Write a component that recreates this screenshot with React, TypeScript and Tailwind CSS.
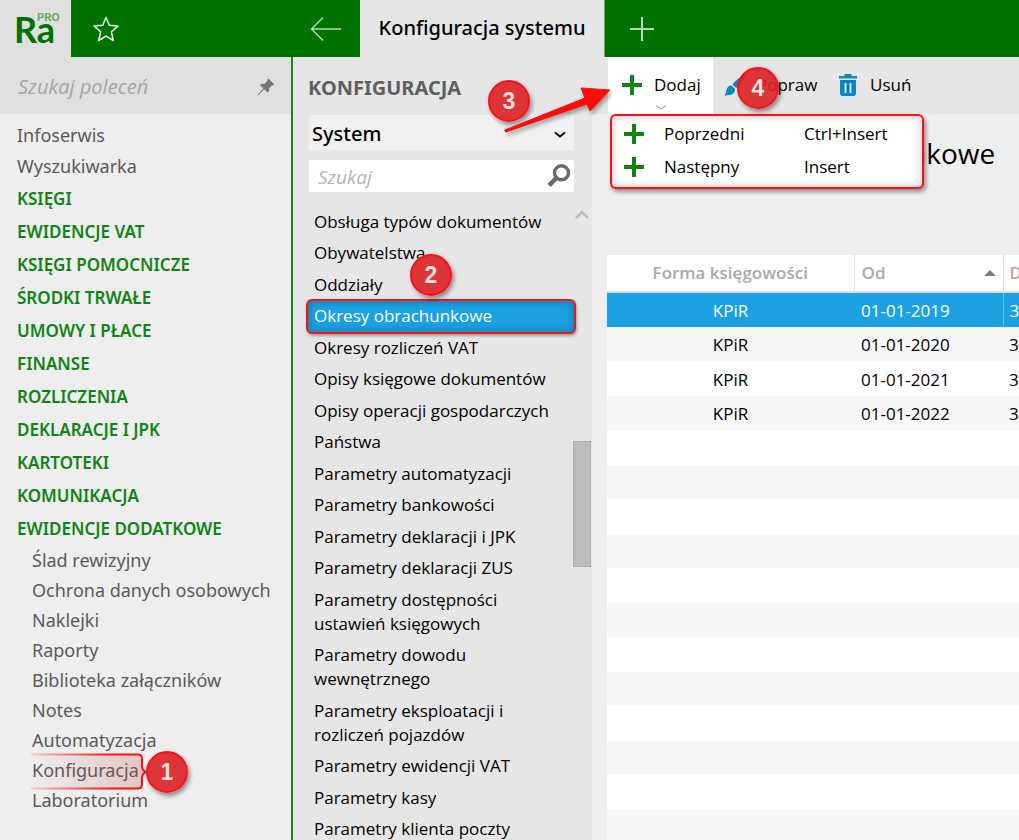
import type { ReactNode } from 'react';

const quickLinks = ['Infoserwis', 'Wyszukiwarka'];

const sections = [
  'KSIĘGI',
  'EWIDENCJE VAT',
  'KSIĘGI POMOCNICZE',
  'ŚRODKI TRWAŁE',
  'UMOWY I PŁACE',
  'FINANSE',
  'ROZLICZENIA',
  'DEKLARACJE I JPK',
  'KARTOTEKI',
  'KOMUNIKACJA',
  'EWIDENCJE DODATKOWE',
];

const extras = [
  'Ślad rewizyjny',
  'Ochrona danych osobowych',
  'Naklejki',
  'Raporty',
  'Biblioteka załączników',
  'Notes',
  'Automatyzacja',
  'Konfiguracja',
  'Laboratorium',
];

const configItems = [
  'Obsługa typów dokumentów',
  'Obywatelstwa',
  'Oddziały',
  'Okresy obrachunkowe',
  'Okresy rozliczeń VAT',
  'Opisy księgowe dokumentów',
  'Opisy operacji gospodarczych',
  'Państwa',
  'Parametry automatyzacji',
  'Parametry bankowości',
  'Parametry deklaracji i JPK',
  'Parametry deklaracji ZUS',
  'Parametry dostępności ustawień księgowych',
  'Parametry dowodu wewnętrznego',
  'Parametry eksploatacji i rozliczeń pojazdów',
  'Parametry ewidencji VAT',
  'Parametry kasy',
  'Parametry klienta poczty',
];

const periods = [
  { form: 'KPiR', from: '01-01-2019', to: '31-12-2019' },
  { form: 'KPiR', from: '01-01-2020', to: '31-12-2020' },
  { form: 'KPiR', from: '01-01-2021', to: '31-12-2021' },
  { form: 'KPiR', from: '01-01-2022', to: '31-12-2022' },
];

const emptyRows = Array.from({ length: 12 }, (_, i) => i);

const menuItems = [
  { label: 'Poprzedni', keys: 'Ctrl+Insert' },
  { label: 'Następny', keys: 'Insert' },
];

function PlusIcon() {
  return (
    <svg viewBox="0 0 20 20" className="size-5 shrink-0" aria-hidden="true">
      <path d="M8 0h4v8h8v4h-8v8H8v-8H0V8h8z" fill="#0f8414" />
    </svg>
  );
}

function Badge({ className, children }: { className: string; children: ReactNode }) {
  return (
    <span
      className={`pointer-events-none absolute z-20 flex size-[42px] items-center justify-center rounded-full border-2 border-[#fb1014] bg-[#da2024]/90 font-['Liberation_Sans',sans-serif] text-[23px] font-bold text-[#fbdfe0] shadow-[2px_3px_4px_rgba(0,0,0,0.4)] ${className}`}
    >
      {children}
    </span>
  );
}

function TopBar() {
  return (
    <header className="flex h-[57px] shrink-0 bg-[#007200] text-white">
      <div className="relative flex w-[71px] items-center bg-[#dfdfdf] pl-[14px] font-['Lato',sans-serif]">
        <span className="text-[36px] leading-8 font-bold text-[#007200]">Ra</span>
        <span className="absolute top-[11px] left-[37px] font-['Inter',sans-serif] text-[11px] leading-3 font-bold text-[#6aaa6a]">
          PRO
        </span>
      </div>
      <button type="button" aria-label="Ulubione" className="flex w-[69px] items-center justify-center">
        <svg viewBox="0 0 26 26" className="size-[26px]" fill="none" stroke="#f2f8f2" strokeWidth="1.5" strokeLinejoin="round" aria-hidden="true">
          <path d="M13 1.5l3.3 7.7 8.6.9-6.5 5.7 1.9 8.700L13 20.100l-7.300 4.400 1.900-8.700L1.100 10.100l8.600-.900z" />
        </svg>
      </button>
      <div className="flex w-[220px] items-center justify-end pr-[18px]">
        <button type="button" aria-label="Wstecz">
          <svg viewBox="0 0 32 26" className="h-[26px] w-8" fill="none" stroke="#b5d8b5" strokeWidth="1.4" aria-hidden="true">
            <path d="M31 13H1.5M13 1.5L1.5 13 13 24.5" />
          </svg>
        </button>
      </div>
      <h1 className="flex w-[245px] items-center justify-center border-r border-[#6aac6a] bg-[#e6e6e6] pb-[2px] font-['Noto_Sans',sans-serif] text-[20px] font-medium text-black">
        Konfiguracja systemu
      </h1>
      <button type="button" aria-label="Nowa karta" className="flex w-[74px] items-center justify-center">
        <svg viewBox="0 0 24 24" className="size-6" stroke="#b5d8b5" strokeWidth="2" aria-hidden="true">
          <path d="M12 0v24M0 12h24" />
        </svg>
      </button>
    </header>
  );
}

function SideMenu() {
  return (
    <aside className="w-[291px] shrink-0 overflow-hidden bg-[#eeeeee] font-['Noto_Sans',sans-serif]">
      <div className="flex h-[57px] items-center bg-[#dfdfdf] pt-[2px] pr-4 pl-[18px]">
        <input
          type="search"
          aria-label="Szukaj poleceń"
          placeholder="Szukaj poleceń"
          className="min-w-0 flex-1 bg-transparent font-['Open_Sans',sans-serif] text-[20px] italic outline-none placeholder:text-[#a5a5a5]"
        />
        <svg viewBox="0 0 18 18" className="size-[18px]" fill="#777777" aria-hidden="true">
          <path d="M11.5.6l5.9 5.9-1.5.9-.9-.2-2.9 3 .1 2.8-1.5 1.6-3.5-3.4L.9 17.4l-.5-.5 5.9-6.3L3 7.3l1.6-1.5 2.8.2 3-3-.2-1z" />
        </svg>
      </div>
      <nav className="pt-[6px] pl-[17px] text-[#5a5a5a]">
        <ul className="text-[18px] leading-[31px]">
          {quickLinks.map((t) => (
            <li key={t}>
              <a href="#">{t}</a>
            </li>
          ))}
        </ul>
        <ul className="text-[17px] leading-[33px] font-semibold text-[#0f8414]">
          {sections.map((t) => (
            <li key={t}>
              <a href="#">{t}</a>
            </li>
          ))}
        </ul>
        <ul className="pl-[15px] text-[18px] leading-[30px]">
          {extras.map((t) => (
            <li key={t} className="relative whitespace-nowrap">
              <a href="#">{t}</a>
              {t === 'Konfiguracja' && (
                <>
                  <svg viewBox="0 0 120 38" className="pointer-events-none absolute -top-[2px] -left-px h-[38px] w-[120px]" aria-hidden="true">
                    <defs>
                      <linearGradient id="frameStroke" gradientUnits="userSpaceOnUse" x1="0" x2="116" y1="0" y2="0">
                        <stop offset="0" stopColor="#fb1014" stopOpacity="0.15" />
                        <stop offset="0.7" stopColor="#fb1014" />
                      </linearGradient>
                      <linearGradient id="frameFill" x1="0" x2="1" y1="0" y2="0">
                        <stop offset="0" stopColor="#c04040" stopOpacity="0" />
                        <stop offset="1" stopColor="#c04040" stopOpacity="0.24" />
                      </linearGradient>
                    </defs>
                    <path
                      d="M0 1.5H107Q111 1.5 111 6V13Q111 18 116 19 111 20 111 25V31Q111 35.5 107 35.5H0"
                      fill="url(#frameFill)"
                      stroke="url(#frameStroke)"
                      strokeWidth="2"
                    />
                  </svg>
                  <Badge className="-top-1 left-[114px]">1</Badge>
                </>
              )}
            </li>
          ))}
        </ul>
      </nav>
    </aside>
  );
}

function ConfigPanel() {
  return (
    <section className="relative flex w-[301px] shrink-0 flex-col border-l-2 border-[#1c861c] bg-[#e6e6e6]">
      <h2 className="h-[58px] pt-4 pl-[15px] font-['Noto_Sans',sans-serif] text-[20px] leading-[30px] font-bold text-[#5f5f5f]">KONFIGURACJA</h2>
      <div className="mr-[18px] ml-4 space-y-[10px]">
        <div className="relative h-[35px] bg-[#f1f1f1]">
          <select
            aria-label="Obszar konfiguracji"
            className="size-full appearance-none pt-[2px] pl-[3px] font-['Noto_Sans',sans-serif] text-[20px] font-medium text-black outline-none"
          >
            <option>System</option>
          </select>
          <svg viewBox="0 0 12 8" className="pointer-events-none absolute top-4 right-[8px] h-2 w-3" fill="none" stroke="#000" strokeWidth="2" aria-hidden="true">
            <path d="M1 1.5l5 4 5-4" />
          </svg>
        </div>
        <div className="flex h-8 items-center bg-white pr-[3px] pl-[9px]">
          <input
            type="search"
            aria-label="Szukaj"
            placeholder="Szukaj"
            className="min-w-0 flex-1 bg-transparent pt-[2px] text-[19px] italic outline-none placeholder:text-[#b4b4b4]"
          />
          <svg viewBox="0 0 24 24" className="size-6" fill="none" stroke="#6b6b6b" aria-hidden="true">
            <circle cx="14.5" cy="8.8" r="7" strokeWidth="3.4" />
            <path d="M9.5 13.8L2 21.3" strokeWidth="4.5" />
          </svg>
        </div>
      </div>
      <div className="mt-[13px] flex min-h-0 flex-1 overflow-hidden">
        <ul className="min-w-0 flex-1 pt-[5px] pr-1 pl-[21px] text-[17px] leading-6 text-black">
          {configItems.map((t) =>
            t === 'Okresy obrachunkowe' ? (
              <li key={t} className="relative pb-2 text-white">
                <span className="absolute -top-[5px] -right-[7px] -left-2 h-[35px] rounded-md border-2 border-[#fb1014] bg-[#1ba1e2] shadow-[inset_0_0_8px_rgba(0,0,0,0.3),1px_2px_3px_rgba(0,0,0,0.3)]" />
                <a href="#" className="relative">
                  {t}
                </a>
                <Badge className="-top-[50px] left-[96px]">2</Badge>
              </li>
            ) : (
              <li key={t} className="odd:pb-[7px] even:pb-2">
                <a href="#">{t}</a>
              </li>
            ),
          )}
        </ul>
        <div className="mr-px flex w-[18px] shrink-0 flex-col items-center">
          <svg viewBox="0 0 14 9" className="mt-[5px] h-[9px] w-3.5" fill="none" stroke="#bcbcbc" strokeWidth="2.5" aria-hidden="true">
            <path d="M1 8l6-6 6 6" />
          </svg>
          <div className="mt-[222px] h-[126px] w-[18px] border border-[#b0b0b0] bg-[#bbbbbb]" />
        </div>
      </div>
      <Badge className="top-[23px] left-[195px]">3</Badge>
      <svg viewBox="0 0 112 52" className="pointer-events-none absolute top-[27px] left-[209px] z-20 h-[52px] w-[112px] drop-shadow-[2px_3px_2px_rgba(0,0,0,0.35)]" aria-hidden="true">
        <path d="M3 46L83 14 79 4 108 6 88 27 85 20 4 48Q2 47 3 46z" fill="#ff0b08" stroke="#ff0b08" strokeWidth="1" />
      </svg>
    </section>
  );
}

function Toolbar() {
  return (
    <div className="relative flex h-[57px] bg-[#e6e6e6] pl-4 text-[17px] text-black">
      <button type="button" aria-haspopup="menu" aria-expanded="true" className="relative flex w-[105px] items-center bg-white pb-[2px] pl-[14px]">
        <PlusIcon />
        <span className="pl-3">Dodaj</span>
        <svg viewBox="0 0 10 5" className="absolute bottom-[4px] left-[48px] h-[5px] w-2.5" fill="none" stroke="#8a8a8a" aria-hidden="true">
          <path d="M0 .5l5 3.5 5-3.5" />
        </svg>
      </button>
      <button type="button" className="relative flex w-[117px] items-center pb-[2px] pl-[11px]">
        <svg viewBox="0 0 22 22" className="size-[22px]" fill="#0e86bf" aria-hidden="true">
          <path d="M21.5.5c1.5 1-6 11-9.500 13.500L8.500 10.500C11 6.500 20-.500 21.500.500zM7.500 11.500l3.500 3.500c.500 5-5 7-10.500 6.500 2-2 1.200-4 2.500-7 1-2.200 2.500-3.200 4.500-3z" />
        </svg>
        <span className="pl-[11px]">Popraw</span>
        <Badge className="top-[10px] left-[24px]">4</Badge>
      </button>
      <button type="button" className="flex items-center pb-[2px] pl-[9px]">
        <svg viewBox="0 0 18 22" className="h-[22px] w-[18px]" aria-hidden="true">
          <path d="M5.5 0h7v2H18v2.5H0V2h5.5zM1 6h16v14l-1.5 2h-13L1 20z" fill="#0e86bf" />
          <path d="M6.5 9v10M11.5 9v10" stroke="#d5e6ee" strokeWidth="1.8" />
        </svg>
        <span className="pl-[13px]">Usuń</span>
      </button>
      <ul
        role="menu"
        className="absolute top-[57px] left-[18px] z-10 w-[314px] rounded-md border-2 border-[#fb1014] bg-white pt-[1px] pb-1 shadow-[inset_0_0_8px_rgba(0,0,0,0.25),2px_3px_4px_rgba(0,0,0,0.4)]"
      >
        {menuItems.map((m) => (
          <li key={m.label} role="none">
            <button type="button" role="menuitem" className="flex h-[33px] w-full items-center pl-[12px] text-left">
              <PlusIcon />
              <span className="w-[140px] pl-[20px]">{m.label}</span>
              <span className="pl-[20px]">{m.keys}</span>
            </button>
          </li>
        ))}
      </ul>
    </div>
  );
}

function PeriodsTable() {
  return (
    <div className="ml-[15px] min-h-0 flex-1 overflow-hidden bg-white">
      <table className="w-full table-fixed border-collapse text-[17px] whitespace-nowrap">
        <colgroup>
          <col className="w-[247px]" />
          <col className="w-[149px]" />
          <col />
        </colgroup>
        <thead>
          <tr className="h-[37px] border-b-2 border-[#dcdcdc] text-[#aaaaaa]">
            <th className="border-r border-dotted border-r-[#cfcfcf] font-semibold">Forma księgowości</th>
            <th className="border-r border-dotted border-r-[#cfcfcf] pr-[7px] pl-[7px] text-left font-semibold">
              <span className="flex items-center justify-between">
                Od
                <svg viewBox="0 0 12 6" className="h-1.5 w-3" fill="#7d7d7d" aria-hidden="true">
                  <path d="M6 0l6 6H0z" />
                </svg>
              </span>
            </th>
            <th className="overflow-hidden pl-[6px] text-left font-semibold">Do</th>
          </tr>
        </thead>
        <tbody>
          {periods.map((p, i) => (
            <tr key={p.from} className={i === 0 ? 'h-[35px] bg-[#1ba1e2] text-white' : 'text-black odd:h-[35px] even:h-[34px] even:bg-[#f7f7f7]'}>
              <td className="pt-[2px] text-center">{p.form}</td>
              <td className={i === 0 ? 'border-r border-[#6cc1ec] pt-[2px] pl-[7px]' : 'pt-[2px] pl-[7px]'}>{p.from}</td>
              <td className="overflow-hidden pt-[2px] pl-[6px]">{p.to}</td>
            </tr>
          ))}
          {emptyRows.map((r) => (
            <tr key={r} className="odd:h-[35px] even:h-[34px] even:bg-[#f7f7f7]">
              <td />
              <td />
              <td />
            </tr>
          ))}
        </tbody>
      </table>
    </div>
  );
}

export default function App() {
  return (
    <div className="flex h-screen flex-col overflow-hidden bg-[#eeeeee] font-['Open_Sans',sans-serif]">
      <TopBar />
      <div className="flex min-h-0 flex-1">
        <SideMenu />
        <ConfigPanel />
        <main className="flex min-w-0 flex-1 flex-col">
          <Toolbar />
          <h2 className="h-[141px] pt-[19px] pl-[110px] text-[28px] leading-10 whitespace-nowrap text-black">Okresy obrachunkowe</h2>
          <PeriodsTable />
        </main>
      </div>
    </div>
  );
}
